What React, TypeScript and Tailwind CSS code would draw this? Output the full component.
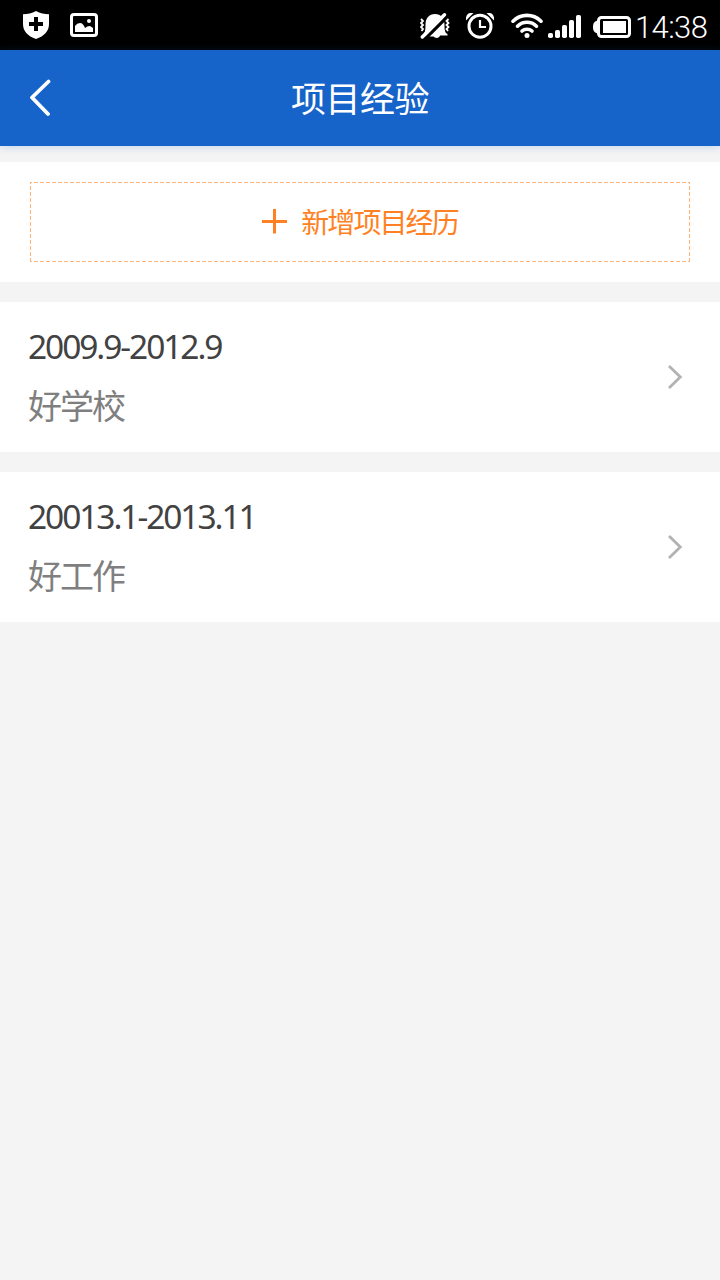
import React from "react";

const ShieldIcon = () => (
  <svg width="26" height="28" viewBox="0 0 26 28">
    <path d="M13 0C9 2.400 4.500 3.300 0 3.300V13c0 7 4.600 12 13 15 8.400-3 13-8 13-15V3.300C21.500 3.300 17 2.400 13 0Z" fill="#fff" />
    <path d="M13 6v14M6 13h14" stroke="#000" strokeWidth="4" />
  </svg>
);

const PictureIcon = () => (
  <svg width="28" height="24" viewBox="0 0 28 24">
    <rect x="1.500" y="1.500" width="25" height="21" rx="2.500" fill="none" stroke="#fff" strokeWidth="3" />
    <path d="M5 19v-6q2-3 5-3 3 0 5 5 2-2 5-2l3 2v4Z" fill="#fff" />
    <circle cx="19" cy="8" r="2" fill="#fff" />
  </svg>
);

const MutedBellIcon = () => (
  <svg width="30" height="26" viewBox="0 0 30 26">
    <path d="M3 22c2-2 2.500-5 2.500-10C5.500 5 9 1 15 1S24.500 5 24.500 12c0 5 .5 8 3 9v1.500h-7.500c-.5 3-5 3-6.500 1H3Z" fill="#fff" />
    <path d="M4.500 26.500 28 3" stroke="#000" strokeWidth="3.200" />
    <path d="M2.300 24 24.500 1.800" stroke="#fff" strokeWidth="3.400" strokeLinecap="round" />
    <path d="m1 6 2 2-2 2 2 2-2 2 2 2-1.500 2M28.500 6l-2 2 2 2-2 2 2 2-2 2 1.500 2" fill="none" stroke="#fff" strokeWidth="1.800" />
  </svg>
);

const AlarmIcon = () => (
  <svg width="28" height="26" viewBox="0 0 28 26">
    <path d="M0 7.500V4.500Q1 0 4.500 0H7.500ZM28 7.500V4.500Q27 0 23.500 0H20.500Z" fill="#fff" />
    <circle cx="14" cy="13.200" r="11" fill="none" stroke="#fff" strokeWidth="3" />
    <path d="M14 7v7h6" fill="none" stroke="#fff" strokeWidth="2.200" />
  </svg>
);

const WifiIcon = () => (
  <svg width="32" height="26" viewBox="0 0 32 26">
    <g fill="none" stroke="#fff" strokeWidth="3.600" strokeLinecap="round">
      <path d="M2 8.200Q8 2.400 16 2.400T30 8.200" />
      <path d="M6.500 13.200Q10.500 9.300 16 9.300T25.500 13.200" />
      <path d="M11 18Q13 16.200 16 16.200T21 18" />
    </g>
    <circle cx="16" cy="22.500" r="2.500" fill="#fff" />
  </svg>
);

const SignalIcon = () => (
  <svg width="33" height="24" viewBox="0 0 33 24" fill="#fff">
    <rect x="0" y="18" width="5" height="5" rx="1.800" />
    <rect x="7" y="15" width="5" height="8" rx="1.800" />
    <rect x="14" y="10" width="5" height="13" rx="1.800" />
    <rect x="21" y="5" width="5" height="18" rx="1.800" />
    <rect x="28" y="0" width="5" height="23" rx="1.800" />
  </svg>
);

const BatteryIcon = () => (
  <svg width="38" height="22" viewBox="0 0 38 22">
    <path d="M5 4.500C1.500 5 0 7 0 11s1.500 6 5 6.500Z" fill="#fff" />
    <rect x="5.500" y="1.500" width="31" height="19" rx="3" fill="none" stroke="#fff" strokeWidth="3" />
    <rect x="10" y="5" width="23" height="12" fill="#fff" />
  </svg>
);

function StatusBar() {
  return (
    <div className="flex h-[50px] items-start bg-black text-white">
      <div className="ml-[23px] mt-[11px]"><ShieldIcon /></div>
      <div className="ml-[21px] mt-[13px]"><PictureIcon /></div>
      <div className="ml-auto mt-[13px]"><MutedBellIcon /></div>
      <div className="ml-4 mt-[13px]"><AlarmIcon /></div>
      <div className="ml-[17px] mt-[13px]"><WifiIcon /></div>
      <div className="ml-[5px] mt-[15px]"><SignalIcon /></div>
      <div className="ml-3 mt-4"><BatteryIcon /></div>
      <span className="ml-1 w-[85px] whitespace-nowrap pt-[3px] font-['Roboto','Liberation_Sans',sans-serif] text-[31px] font-light leading-[50px] tracking-[-0.6px]">14:38</span>
    </div>
  );
}

function Header() {
  return (
    <header className="relative flex h-24 items-center bg-[#1663c9] shadow-[0_1px_8px_rgba(22,99,201,0.22)]">
      <button aria-label="返回" className="w-20 pl-[29px]">
        <svg width="23" height="38" viewBox="0 0 23 38" fill="none" stroke="#fff" strokeWidth="3.800" strokeLinecap="round" strokeLinejoin="round">
          <path d="M19.500 2.500 3 18.500 19 35" />
        </svg>
      </button>
      <h1 className="flex-1 pr-[80px] pt-[2px] text-center text-[35px] font-normal leading-[48px] tracking-[-0.500px] text-white">项目经验</h1>
    </header>
  );
}

const dashes = [
  "bg-[repeating-linear-gradient(90deg,#ffb478_0_2px,transparent_2px_4px,#ffb478_4px_6px),repeating-linear-gradient(90deg,#ffb478_0_2px,transparent_2px_4px,#ffb478_4px_6px),repeating-linear-gradient(180deg,#ffb478_0_2px,transparent_2px_4px,#ffb478_4px_6px),repeating-linear-gradient(180deg,#ffb478_0_2px,transparent_2px_4px,#ffb478_4px_6px)]",
  "bg-no-repeat [background-size:100%_1px,100%_1px,1px_100%,1px_100%] [background-position:top,bottom,left,right]",
].join(" ");

function AddButton() {
  return (
    <section className="bg-white px-[30px] py-5">
      <button className={`flex h-20 w-full items-center justify-center text-[#ff8123] ${dashes}`}>
        <svg className="mr-[14px]" width="25" height="26" viewBox="0 0 25 26" stroke="currentColor" strokeWidth="3">
          <path d="M12.500 0v24.500M0 12.500h25" />
        </svg>
        <span className="text-[28px] leading-10 tracking-[-1.900px]">新增项目经历</span>
      </button>
    </section>
  );
}

function ProjectItem({ period, name }: { period: string; name: string }) {
  return (
    <article className="mt-5 flex h-[150px] items-center justify-between bg-white pl-7 pr-[37px]">
      <div className="pb-[2px] text-[34px]">
        <p className="text-[33.5px] leading-[60px] tracking-[-2.070px] text-[#424242]">{period}</p>
        <p className="leading-[60px] tracking-[-2px] text-[#7f7f7f]">{name}</p>
      </div>
      <svg width="16" height="26" viewBox="0 0 16 26" fill="none" stroke="#b2b2b2" strokeWidth="2.800">
        <path d="m2 2 11.300 11L2 24" />
      </svg>
    </article>
  );
}

export default function App() {
  return (
    <main className="min-h-[1280px] w-[720px] bg-[#f4f4f4] font-['Noto_Sans','Noto_Sans_CJK_SC',sans-serif]" lang="zh-CN">
      <StatusBar />
      <Header />
      <div className="pt-4">
        <AddButton />
        <ProjectItem period="2009.9-2012.9" name="好学校" />
        <ProjectItem period="20013.1-2013.11" name="好工作" />
      </div>
    </main>
  );
}
